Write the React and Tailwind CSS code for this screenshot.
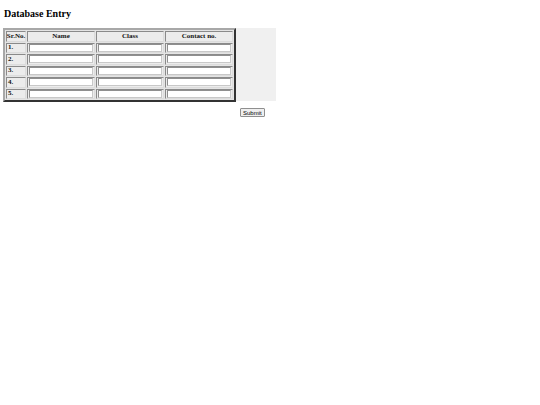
import React from "react";

const serif = { fontFamily: '"Liberation Serif", "Times New Roman", serif' };

function Cell({ children }) {
  return (
    <div className="h-[10.5px] border border-t-[#8a8a8a] border-l-[#8a8a8a] border-r-[#dcdcdc] border-b-[#dcdcdc] bg-[#ececec] flex items-center justify-center px-[1px]">
      {children}
    </div>
  );
}

function InputCell() {
  return (
    <div className="h-[10.5px] border border-t-[#8a8a8a] border-l-[#8a8a8a] border-r-[#dcdcdc] border-b-[#dcdcdc] bg-[#ececec] flex items-center px-[1px]">
      <div className="w-full h-[8px] bg-white border border-t-[#8f8f8f] border-l-[#8f8f8f] border-r-[#c8c8c8] border-b-[#c8c8c8]" />
    </div>
  );
}

export default function App() {
  const rows = ["1.", "2.", "3.", "4.", "5."];
  return (
    <div className="w-[540px] h-[405px] bg-white px-[3px] pt-[8px]" style={serif}>
      <h1 className="text-[10px] font-bold leading-[12px] pl-[1px] text-black">Database Entry</h1>
      <div className="flex mt-[8px]">
        <div className="border-[2px] border-t-[#a8a8a8] border-l-[#a8a8a8] border-r-[#333333] border-b-[#333333] bg-[#e4e4e4] p-[1px]">
          <div className="grid grid-cols-[20px_68px_68px_68px] gap-[1px] text-[7px] font-bold text-[#111] leading-none">
            <Cell>Sr.No.</Cell>
            <Cell>Name</Cell>
            <Cell>Class</Cell>
            <Cell>Contact no.</Cell>
            {rows.map((r) => (
              <React.Fragment key={r}>
                <div className="h-[10.5px] border border-t-[#8a8a8a] border-l-[#8a8a8a] border-r-[#dcdcdc] border-b-[#dcdcdc] bg-[#ececec] flex items-center px-[1px]">
                  {r}
                </div>
                <InputCell />
                <InputCell />
                <InputCell />
              </React.Fragment>
            ))}
          </div>
        </div>
        <div className="w-[40px] bg-[#f0f0f0] mb-[1px]" />
      </div>
      <div className="flex pl-[237px] mt-[6px]">
        <button
          className="h-[9px] px-[2px] text-[6px] leading-none bg-[#efefef] border border-[#8f8f8f] rounded-[1px] text-black"
          style={{ fontFamily: '"Liberation Sans", Arial, sans-serif' }}
        >
          Submit
        </button>
      </div>
    </div>
  );
}
